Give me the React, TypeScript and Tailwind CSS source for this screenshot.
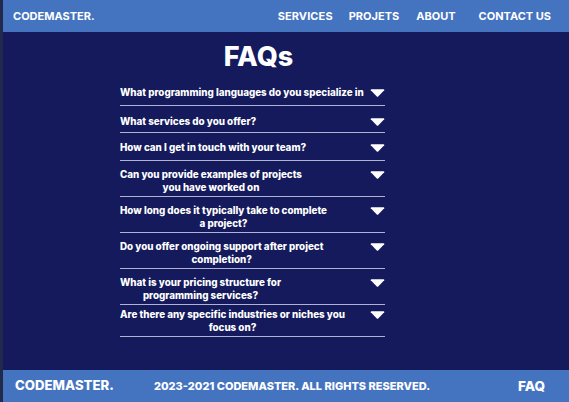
const faqs: { q: string[]; pad: string }[] = [
  { q: ['What programming languages do you specialize in'], pad: 'pt-[7px] pb-[6px]' },
  { q: ['What services do you offer?'], pad: 'pt-[9px] pb-[4px]' },
  { q: ['How can I get in touch with your team?'], pad: 'pt-[8px] pb-[6px]' },
  { q: ['Can you provide examples of projects', 'you have worked on'], pad: 'pt-[7px] pb-[2px]' },
  { q: ['How long does it typically take to complete', 'a project?'], pad: 'pt-[7px] pb-[2px]' },
  { q: ['Do you offer ongoing support after project', 'completion?'], pad: 'pt-[7px] pb-[2px]' },
  { q: ['What is your pricing structure for', 'programming services?'], pad: 'pt-[7px] pb-[2px]' },
  { q: ['Are there any specific industries or niches you', 'focus on?'], pad: 'pt-[3px] pb-[2px]' },
];

function Arrow() {
  return (
    <svg width="15" height="8" viewBox="0 0 15 8" className="shrink-0">
      <path d="M0.8 1.2 Q0.4 0.3 1.6 0.3 L13.4 0.3 Q14.6 0.3 14.2 1.2 L8.2 7.4 Q7.5 8 6.8 7.4 Z" fill="#ffffff" />
    </svg>
  );
}

export default function App() {
  return (
    <div
      className="h-[402px] w-[569px] flex flex-col border-l-[3px] border-[#222a4c] bg-[#141a5c] text-white overflow-hidden"
      style={{ fontFamily: 'Inter, "Liberation Sans", sans-serif' }}
    >
      <header className="h-8 shrink-0 bg-[#4473c0] flex items-center justify-between pl-[10px] pr-[18px] text-[11px] font-bold">
        <span>CODEMASTER.</span>
        <nav className="flex items-center">
          <a className="tracking-[0.1px]">SERVICES</a>
          <a className="ml-[16px]">PROJETS</a>
          <a className="ml-[17px]">ABOUT</a>
          <a className="ml-[23px]">CONTACT US</a>
        </nav>
      </header>

      <main className="flex-1 flex flex-col">
        <h1 className="mt-[9px] pr-[55px] text-center text-[27px] font-extrabold leading-[32px]">FAQs</h1>
        <div className="mt-[6px] ml-[117px] w-[265px] flex flex-col">
          {faqs.map((f, i) => (
            <div
              key={i}
              className={`flex items-start justify-between border-b-[1.5px] border-[#aeb3d6] ${f.pad}`}
            >
              <p className="text-[9.8px] font-extrabold leading-[13px] text-center">
                {f.q[0]}
                {f.q[1] && <br />}
                {f.q[1]}
              </p>
              <div className="mt-[3px]">
                <Arrow />
              </div>
            </div>
          ))}
        </div>
      </main>

      <footer className="h-8 shrink-0 bg-[#4473c0] flex items-center pl-[12px] pr-[24px] font-extrabold">
        <span className="text-[13.2px]">CODEMASTER.</span>
        <span className="ml-[40px] text-[11px]">2023-2021 CODEMASTER. ALL RIGHTS RESERVED.</span>
        <span className="ml-auto text-[13.5px]">FAQ</span>
      </footer>
    </div>
  );
}
